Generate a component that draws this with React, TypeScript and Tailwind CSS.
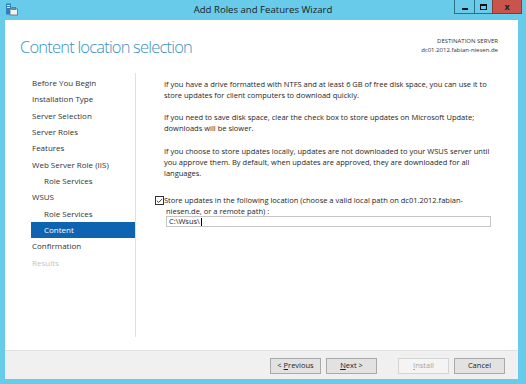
import { Check } from 'lucide-react';

interface NavItem {
  label: string;
  indent?: boolean;
  active?: boolean;
  disabled?: boolean;
}

const navItems: NavItem[] = [
  { label: 'Before You Begin' },
  { label: 'Installation Type' },
  { label: 'Server Selection' },
  { label: 'Server Roles' },
  { label: 'Features' },
  { label: 'Web Server Role (IIS)' },
  { label: 'Role Services', indent: true },
  { label: 'WSUS' },
  { label: 'Role Services', indent: true },
  { label: 'Content', indent: true, active: true },
  { label: 'Confirmation' },
  { label: 'Results', disabled: true },
];

function AppIcon() {
  return (
    <svg width="13" height="13" viewBox="0 0 13 13">
      <rect x="1" y="0.5" width="5" height="11" fill="#2f7fc1" />
      <rect x="2" y="2" width="3" height="1" fill="#cfe8f7" />
      <rect x="2" y="4" width="3" height="1" fill="#cfe8f7" />
      <rect x="5" y="6" width="7.5" height="6" fill="#f2f2f2" stroke="#5b6a75" strokeWidth="0.8" />
      <rect x="7" y="4.5" width="3.5" height="2" fill="none" stroke="#5b6a75" strokeWidth="0.8" />
    </svg>
  );
}

function WindowButton({ label, children, className }: { label: string; children: React.ReactNode; className: string }) {
  return (
    <div aria-label={label} className={`flex h-[14px] items-center justify-center border border-t-0 border-[#2d6f86] ${className}`}>
      {children}
    </div>
  );
}

function WizardButton({ children, disabled, className = '' }: { children: React.ReactNode; disabled?: boolean; className?: string }) {
  return (
    <button
      className={`block h-[16px] w-[51px] text-[7.5px] leading-none ${className} ${
        disabled ? 'border border-[#d4d4d4] bg-[#f4f4f4] text-[#a6a6a6]' : 'border border-[#a9a9a9] bg-[#e2e2e2] text-[#1e1e1e]'
      }`}
    >
      {children}
    </button>
  );
}

export default function App() {
  return (
    <div className="flex h-[384px] w-[526px] flex-col bg-[#68cbe9] font-['Open_Sans',sans-serif] text-[#1e1e1e]">
      {/* title bar */}
      <div className="relative flex h-[20px] shrink-0 items-center">
        <div className="ml-[5px] mt-[-2px]">
          <AppIcon />
        </div>
        <div className="absolute inset-x-0 top-[3px] text-center text-[9.6px] leading-[13px] text-[#1b1b1b]">
          Add Roles and Features Wizard
        </div>
        <div className="absolute right-[4px] top-0 flex">
          <WindowButton label="minimize" className="w-[20px] border-r-0">
            <span className="mt-[4px] h-[2px] w-[6px] bg-[#111]" />
          </WindowButton>
          <WindowButton label="maximize" className="w-[18px] border-r-0">
            <span className="h-[6px] w-[7px] border-[1.5px] border-t-[2px] border-[#111]" />
          </WindowButton>
          <WindowButton label="close" className="w-[30px] border-[#8a3a34] bg-[#c9544c]">
            <span className="text-[9px] font-bold leading-none text-[#222]">x</span>
          </WindowButton>
        </div>
      </div>

      {/* window body */}
      <div className="ml-[5px] flex h-[359px] w-[513px] flex-col bg-white">
        <div className="flex h-[53px] shrink-0 items-start justify-between pl-[15px] pr-[20px]">
          <h1 className="mt-[16px] text-[16.5px] font-light leading-[22px] tracking-[-0.8px] text-[#3a90c4]">
            Content location selection
          </h1>
          <div className="mt-[17px] text-right text-[6px] leading-[9px] text-[#333]">
            <div>DESTINATION SERVER</div>
            <div>dc01.2012.fabian-niesen.de</div>
          </div>
        </div>

        <div className="flex h-[264px] shrink-0">
          <nav className="w-[131px] shrink-0 border-r border-[#e0e0e0] pl-[26px] pt-[2px]">
            {navItems.map((item, i) => (
              <div
                key={i}
                className={`flex h-[16.33px] items-center text-[8px] ${item.indent ? 'pl-[13px]' : 'pl-[1px]'} ${
                  item.active ? 'bg-[#0e64b0] text-white' : item.disabled ? 'text-[#c4c4c4]' : 'text-[#333]'
                }`}
              >
                {item.label}
              </div>
            ))}
          </nav>

          <div className="flex-1 whitespace-nowrap pl-[28px] pt-[6px] text-[7.5px] leading-[11px] text-[#1e1e1e]">
            <p>
              If you have a drive formatted with NTFS and at least 6 GB of free disk space, you can use it to
              <br />
              store updates for client computers to download quickly.
            </p>
            <p className="mt-[11px]">
              If you need to save disk space, clear the check box to store updates on Microsoft Update;
              <br />
              downloads will be slower.
            </p>
            <p className="mt-[12px]">
              If you choose to store updates locally, updates are not downloaded to your WSUS server until
              <br />
              you approve them. By default, when updates are approved, they are downloaded for all
              <br />
              languages.
            </p>
            <div className="ml-[-9px] mt-[16px] flex">
              <span className="mt-[1px] flex h-[9px] w-[9px] shrink-0 items-center justify-center border border-[#333] bg-white">
                <Check size={8} strokeWidth={3} color="#222" />
              </span>
              <div>
                Store updates in the following location (choose a valid local path on dc01.2012.fabian-
                <br />
                <span className="pl-[2px]">niesen.de, or a remote path) :</span>
              </div>
            </div>
            <div className="ml-[2px] mt-[-1px] flex h-[11px] w-[325px] items-center border border-[#c6c6c6] pl-[2px]">
              C:\Wsus\<span className="ml-[1px] h-[8px] w-px bg-black" />
            </div>
          </div>
        </div>

        <div className="h-[13px] shrink-0" />

        <div className="flex h-[29px] shrink-0 items-start justify-end border-t border-[#e2e2e2] bg-[#f0f0f0] pr-[13px] pt-[7px]">
          <WizardButton>
            &lt; <u>P</u>revious
          </WizardButton>
          <WizardButton className="ml-[5px]">
            <u>N</u>ext &gt;
          </WizardButton>
          <WizardButton className="ml-[21px]" disabled>
            <u>I</u>nstall
          </WizardButton>
          <WizardButton className="ml-[5px]">Cancel</WizardButton>
        </div>
      </div>
    </div>
  );
}
